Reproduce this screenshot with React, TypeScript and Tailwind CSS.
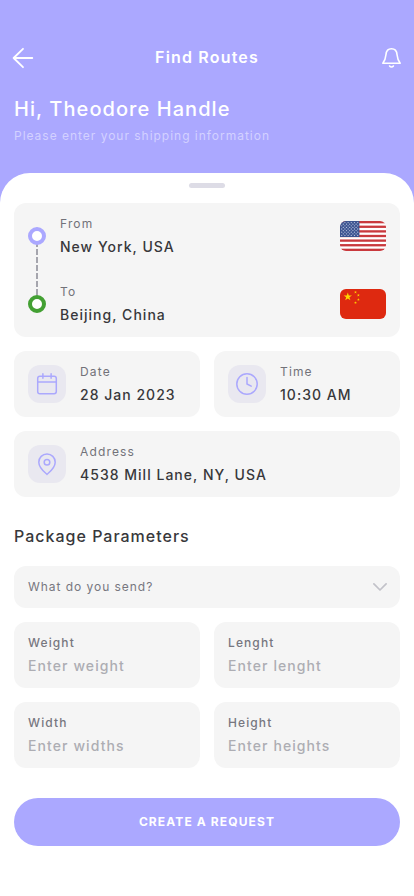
import { ReactNode } from "react";

interface FieldProps {
  label: string;
  value: string;
}

const STAR = "M0 -1L.225 -.309H.951L.363 .118L.588 .809L0 .382L-.588 .809L-.363 .118L-.951 -.309H-.225Z";

const smallStars = [
  { x: 15.5, y: 3.3 },
  { x: 18.4, y: 6.2 },
  { x: 18.4, y: 10.6 },
  { x: 15.5, y: 13.7 },
];

function UsFlag() {
  const stars = [];
  for (let row = 0; row < 9; row++) {
    for (let col = row % 2; col < 11; col += 2) {
      stars.push(
        <circle key={`${row}-${col}`} cx={1.7 + col * 1.6} cy={1.6 + row * 1.6} r="0.65" fill="#b4bddb" />
      );
    }
  }

  return (
    <svg viewBox="0 0 46 30" className="h-[30px] w-[46px] rounded-[6px]">
      <rect width="46" height="30" fill="#fff" />
      {[0, 1, 2, 3, 4, 5, 6].map((i) => (
        <rect key={i} y={i * 4.615} width="46" height="2.308" fill="#c9393d" />
      ))}
      <rect width="19.4" height="16" fill="#3c5490" />
      {stars}
    </svg>
  );
}

function ChinaFlag() {
  return (
    <svg viewBox="0 0 46 30" className="h-[30px] w-[46px] rounded-[6px]">
      <rect width="46" height="30" fill="#de2910" />
      <path d={STAR} transform="translate(7.8 7.8) scale(4.4)" fill="#ffd800" />
      {smallStars.map((s) => (
        <path key={`${s.x}-${s.y}`} d={STAR} transform={`translate(${s.x} ${s.y}) scale(1.5)`} fill="#ffd800" />
      ))}
    </svg>
  );
}

function Stroke({ className, children }: { className: string; children: ReactNode }) {
  return (
    <svg
      viewBox="0 0 24 24"
      fill="none"
      stroke="currentColor"
      strokeLinecap="round"
      strokeLinejoin="round"
      className={className}
    >
      {children}
    </svg>
  );
}

function FieldText({ label, value }: FieldProps) {
  return (
    <div>
      <div className="text-xs leading-[14px] tracking-[1.15px] text-[#727279]">{label}</div>
      <div className="mt-2 text-sm leading-4 font-medium tracking-[1.02px] text-[#38383b]">{value}</div>
    </div>
  );
}

function RouteStop({ label, value, flag }: FieldProps & { flag: ReactNode }) {
  return (
    <div className="flex items-center justify-between">
      <FieldText label={label} value={value} />
      {flag}
    </div>
  );
}

function InfoCard({ label, value, icon }: FieldProps & { icon: ReactNode }) {
  return (
    <div className="flex h-[66px] items-center gap-[14px] rounded-xl bg-[#f5f5f5] px-[14px]">
      <div className="flex size-[38px] items-center justify-center rounded-xl bg-[#e9e8f0] text-[#aba8fd]">
        {icon}
      </div>
      <FieldText label={label} value={value} />
    </div>
  );
}

function InputCard({ label, value }: FieldProps) {
  return (
    <label className="flex h-[66px] flex-col rounded-xl bg-[#f5f5f5] px-[14px] pt-[14px]">
      <span className="text-xs leading-[14px] font-medium tracking-[1.1px] text-[#77777f]">{label}</span>
      <span className="mt-2 text-sm leading-4 font-medium tracking-[1.09px] text-[#adadb3]">{value}</span>
    </label>
  );
}

export default function App() {
  return (
    <div className="h-[896px] w-[414px] overflow-hidden bg-[#aba8ff] font-['Inter','Liberation_Sans',sans-serif]">
      <header className="h-[173px] px-[14px] pt-[46px] text-white">
        <div className="flex h-6 items-center justify-between">
          <Stroke className="-ml-[3px] size-6 stroke-[1.8]">
            <path d="M21.3 12H2.6M12 2.8L2.6 12L12 21.2" />
          </Stroke>
          <h1 className="pb-0.5 text-base leading-6 font-semibold tracking-[1.18px]">Find Routes</h1>
          <Stroke className="-mr-[3px] size-6 stroke-[1.6]">
            <path d="M3.8 17.2H21.2C19 14.6 18.4 12.6 18 8.5C17.7 4.9 15.6 2.8 12.5 2.8C9.4 2.8 7.3 4.9 7 8.5C6.6 12.6 6 14.6 3.8 17.2Z" />
            <path d="M10.6 20C11.6 21.4 13.4 21.4 14.4 20" />
          </Stroke>
        </div>
        <h2 className="mt-[27px] text-xl leading-6 font-medium tracking-[1.06px]">Hi, Theodore Handle</h2>
        <p className="mt-2 text-xs leading-[14px] tracking-[0.98px] text-[#d3d1ff]">
          Please enter your shipping information
        </p>
      </header>

      <main className="h-[723px] rounded-t-[30px] bg-white px-[14px] pt-[10px]">
        <div className="mx-auto h-[5px] w-9 rounded-full bg-[#dddce6]" />

        <section className="mt-[15px] flex h-[134px] gap-[14px] rounded-xl bg-[#f5f5f5] p-[14px]">
          <svg viewBox="0 0 18 106" className="h-[106px] w-[18px]" fill="none">
            <path d="M9 26V78" stroke="#a5a5ad" strokeWidth="2" strokeDasharray="6 2" strokeDashoffset="2" />
            <circle cx="9" cy="19" r="7" fill="#fff" stroke="#aba8ff" strokeWidth="4" />
            <circle cx="9" cy="87" r="7" fill="#fff" stroke="#43a033" strokeWidth="4" />
          </svg>
          <div className="flex flex-1 flex-col justify-between">
            <RouteStop label="From" value="New York, USA" flag={<UsFlag />} />
            <RouteStop label="To" value="Beijing, China" flag={<ChinaFlag />} />
          </div>
        </section>

        <section className="mt-[14px] grid grid-cols-2 gap-[14px]">
          <InfoCard
            label="Date"
            value="28 Jan 2023"
            icon={
              <Stroke className="size-6 stroke-[1.5]">
                <rect x="2.7" y="4.2" width="18.6" height="17.6" rx="2.2" />
                <path d="M2.7 9.9H21.3M7.9 1.8V6.2M16.1 1.8V6.2" />
              </Stroke>
            }
          />
          <InfoCard
            label="Time"
            value="10:30 AM"
            icon={
              <Stroke className="size-6 stroke-[1.5]">
                <circle cx="12" cy="12" r="10.2" />
                <path d="M12 5.5V12L16.2 14.2" />
              </Stroke>
            }
          />
          <div className="col-span-2">
            <InfoCard
              label="Address"
              value="4538 Mill Lane, NY, USA"
              icon={
                <Stroke className="size-6 stroke-[1.5]">
                  <path d="M12 22.4C9.5 20.2 3.8 15.8 3.8 10.2C3.8 5.6 7.4 2 12 2C16.6 2 20.2 5.6 20.2 10.2C20.2 15.8 14.5 20.2 12 22.4Z" />
                  <circle cx="12" cy="10.2" r="2.8" />
                </Stroke>
              }
            />
          </div>
        </section>

        <h3 className="mt-[29px] text-base leading-5 font-medium tracking-[1px] text-[#38383b]">
          Package Parameters
        </h3>

        <button className="mt-5 flex h-[42px] w-full items-center justify-between rounded-xl bg-[#f5f5f5] pr-[13px] pl-[14px]">
          <span className="text-xs tracking-[0.96px] text-[#77777f]">What do you send?</span>
          <svg viewBox="0 0 14 8" className="h-2 w-[14px]" fill="none" stroke="#c2c2c9" strokeWidth="1.7">
            <path d="M.9 .9L7 7L13.1 .9" strokeLinecap="round" strokeLinejoin="round" />
          </svg>
        </button>

        <section className="mt-[14px] grid grid-cols-2 gap-[14px]">
          <InputCard label="Weight" value="Enter weight" />
          <InputCard label="Lenght" value="Enter lenght" />
          <InputCard label="Width" value="Enter widths" />
          <InputCard label="Height" value="Enter heights" />
        </section>

        <button className="mt-[30px] h-12 w-full rounded-full bg-[#aba8ff] text-xs font-bold tracking-[1.12px] text-white">
          CREATE A REQUEST
        </button>
      </main>
    </div>
  );
}
